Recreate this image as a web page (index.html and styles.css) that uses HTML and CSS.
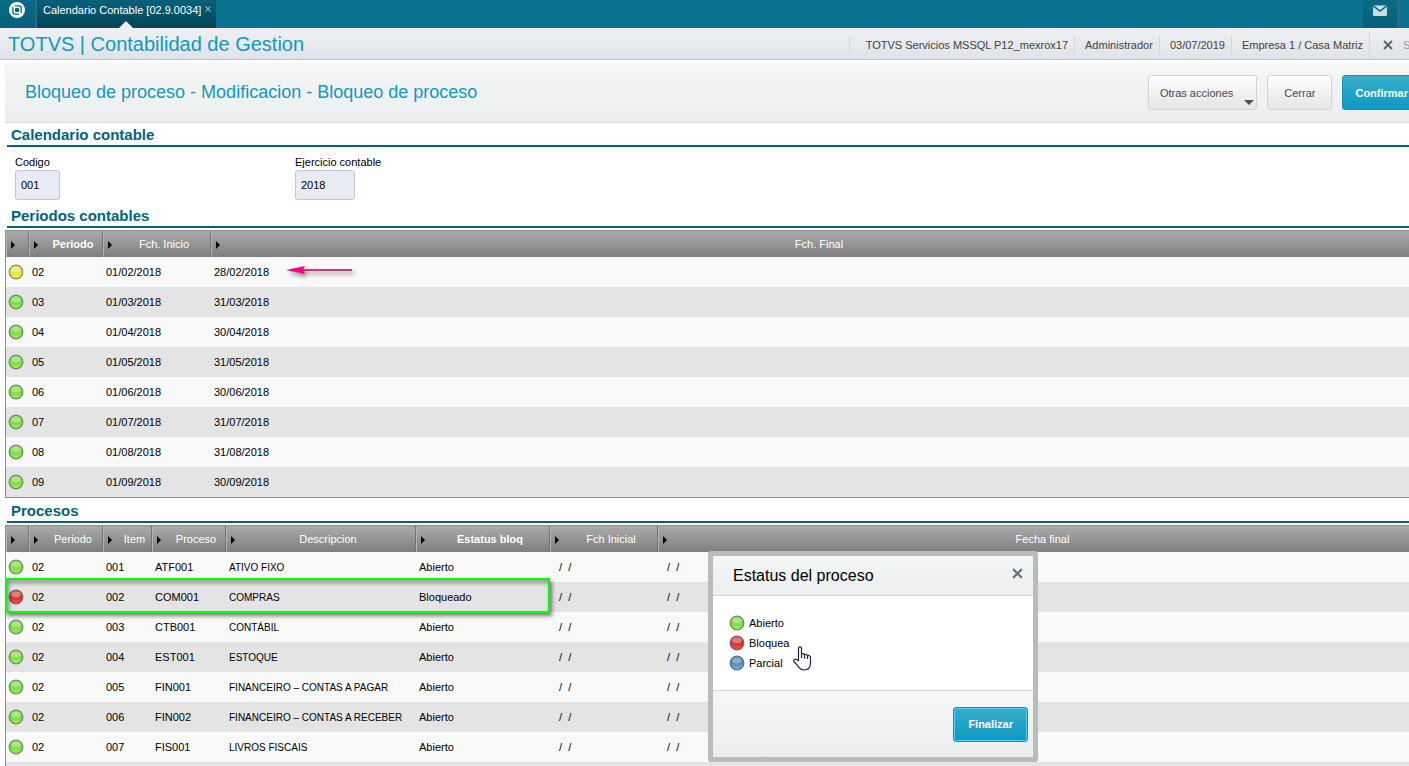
FILE: index.html
```html
<!DOCTYPE html>
<html lang="es">
  <head>
    <meta charset="UTF-8" />
    <meta name="viewport" content="width=device-width, initial-scale=1" />
    <title>Calendario Contable | TOTVS</title>
    <link rel="stylesheet" href="styles.css">
  </head>
  <body>
    <svg class="defs" aria-hidden="true">
      <defs>
        <linearGradient id="gYellow" x2="0" y2="1"><stop offset="0" stop-color="#e0de58"/><stop offset=".5" stop-color="#e4e33a"/><stop offset="1" stop-color="#f2f238"/></linearGradient>
        <linearGradient id="gGreen" x2="0" y2="1"><stop offset="0" stop-color="#86d455"/><stop offset=".5" stop-color="#78da3a"/><stop offset="1" stop-color="#9cf55c"/></linearGradient>
        <linearGradient id="gRed" x2="0" y2="1"><stop offset="0" stop-color="#c94747"/><stop offset=".5" stop-color="#d92a2a"/><stop offset="1" stop-color="#ff5050"/></linearGradient>
        <linearGradient id="gBlue" x2="0" y2="1"><stop offset="0" stop-color="#4f83b8"/><stop offset=".5" stop-color="#4682be"/><stop offset="1" stop-color="#82baee"/></linearGradient>
        <g id="shine"><ellipse cx="8" cy="5.500" rx="4.800" ry="3" fill="#fff" opacity=".35"/></g>
        <symbol id="yellow" viewBox="0 0 16 16"><circle cx="8" cy="8" r="6.8" fill="url(#gYellow)" stroke="#8f8f6a" stroke-width="1.3"/><use href="#shine"/></symbol>
        <symbol id="green" viewBox="0 0 16 16"><circle cx="8" cy="8" r="6.8" fill="url(#gGreen)" stroke="#71906a" stroke-width="1.3"/><use href="#shine"/></symbol>
        <symbol id="red" viewBox="0 0 16 16"><circle cx="8" cy="8" r="6.8" fill="url(#gRed)" stroke="#7f6262" stroke-width="1.3"/><use href="#shine"/></symbol>
        <symbol id="blue" viewBox="0 0 16 16"><circle cx="8" cy="8" r="6.8" fill="url(#gBlue)" stroke="#62748a" stroke-width="1.3"/><use href="#shine"/></symbol>
        <symbol id="close" viewBox="0 0 10 10"><path d="M1 1l8 8M9 1l-8 8" fill="none" stroke="currentColor" stroke-width="2"/></symbol>
      </defs>
    </svg>

    <div class="page">
      <nav class="topbar">
        <a href="#" class="home" aria-label="Inicio">
          <svg width="18" height="18" viewBox="0 0 18 18"><circle cx="9" cy="9" r="8" fill="#fff"/><path d="M6.500 4.200H11c2 0 2.800 1 2.800 2.800v5.200c-1-.2-1.300-.8-1.300-1.800V7.300c0-1.300-.5-1.800-1.800-1.800H8.200c-1 0-1.600-.4-1.700-1.300zM11.500 13.800H7c-2 0-2.800-1-2.800-2.800V5.800c1 .2 1.300.8 1.300 1.800v3.100c0 1.300.5 1.800 1.800 1.800h2.500c1 0 1.600.4 1.700 1.300z" fill="#08657e"/><rect x="7" y="7" width="4" height="4" rx=".8" fill="#08657e"/></svg>
        </a>
        <div class="tab">
          <span>Calendario Contable [02.9.0034]</span>
          <button type="button" class="tab-close" aria-label="Cerrar pestaña"><svg width="6" height="6"><use href="#close"/></svg></button>
        </div>
        <button type="button" class="mail" aria-label="Mensajes">
          <svg width="14" height="11" viewBox="0 0 14 11"><rect y=".5" width="14" height="10.500" rx="1" fill="#cbdde3"/><path d="M.5 1.200L7 6l6.500-4.800" fill="none" stroke="#08657e" stroke-width="1.500"/></svg>
        </button>
      </nav>

      <header class="appbar">
        <h1>TOTVS | Contabilidad de Gestion</h1>
        <ul class="session">
          <li>TOTVS Servicios MSSQL P12_mexrox17</li>
          <li>Administrador</li>
          <li>03/07/2019</li>
          <li>Empresa 1 / Casa Matriz</li>
        </ul>
        <a href="#" class="exit"><svg width="10" height="10"><use href="#close"/></svg>Salir</a>
      </header>

      <main>
        <div class="title-bar">
          <h2>Bloqueo de proceso - Modificacion - Bloqueo de proceso</h2>
          <button type="button" class="btn btn-menu">Otras acciones</button>
          <button type="button" class="btn">Cerrar</button>
          <button type="button" class="btn btn-primary">Confirmar</button>
        </div>

        <h3>Calendario contable</h3>
        <form class="fields">
          <div class="field">
            <label for="codigo">Codigo</label>
            <input type="text" id="codigo" class="short" value="001" readonly />
          </div>
          <div class="field">
            <label for="ejercicio">Ejercicio contable</label>
            <input type="text" id="ejercicio" class="long" value="2018" readonly />
          </div>
        </form>

        <h3>Periodos contables</h3>
        <table class="grid periodos">
          <colgroup><col class="c-dot"><col class="c-periodo"><col class="c-fecha"><col></colgroup>
          <thead>
            <tr><th></th><th class="sorted">Periodo</th><th>Fch. Inicio</th><th>Fch. Final</th></tr>
          </thead>
          <tbody>
            <tr><td><svg class="dot"><use href="#yellow"/></svg></td><td>02</td><td>01/02/2018</td><td class="marked">28/02/2018
              <svg class="arrow" width="72" height="18" viewBox="0 0 72 18"><path d="M17 6h49" stroke="#c8387f" stroke-width="2"/><path d="M0 6l19-4-2 4 2 4z" fill="#ff0080"/></svg></td></tr>
            <tr><td><svg class="dot"><use href="#green"/></svg></td><td>03</td><td>01/03/2018</td><td>31/03/2018</td></tr>
            <tr><td><svg class="dot"><use href="#green"/></svg></td><td>04</td><td>01/04/2018</td><td>30/04/2018</td></tr>
            <tr><td><svg class="dot"><use href="#green"/></svg></td><td>05</td><td>01/05/2018</td><td>31/05/2018</td></tr>
            <tr><td><svg class="dot"><use href="#green"/></svg></td><td>06</td><td>01/06/2018</td><td>30/06/2018</td></tr>
            <tr><td><svg class="dot"><use href="#green"/></svg></td><td>07</td><td>01/07/2018</td><td>31/07/2018</td></tr>
            <tr><td><svg class="dot"><use href="#green"/></svg></td><td>08</td><td>01/08/2018</td><td>31/08/2018</td></tr>
            <tr><td><svg class="dot"><use href="#green"/></svg></td><td>09</td><td>01/09/2018</td><td>30/09/2018</td></tr>
          </tbody>
        </table>

        <h3>Procesos</h3>
        <table class="grid procesos">
          <colgroup><col class="c-dot"><col class="c-periodo"><col class="c-item"><col class="c-periodo"><col class="c-desc"><col class="c-estatus"><col class="c-fecha"><col></colgroup>
          <thead>
            <tr><th></th><th>Periodo</th><th>Item</th><th>Proceso</th><th>Descripcion</th><th class="sorted">Estatus bloq</th><th>Fch Inicial</th><th>Fecha final</th></tr>
          </thead>
          <tbody>
            <tr><td><svg class="dot"><use href="#green"/></svg></td><td>02</td><td>001</td><td>ATF001</td><td class="desc">ATIVO FIXO</td><td>Abierto</td><td class="date">/&nbsp; /</td><td class="date">/&nbsp; /</td></tr>
            <tr><td class="marked"><span class="highlight"></span><svg class="dot"><use href="#red"/></svg></td><td>02</td><td>002</td><td>COM001</td><td class="desc">COMPRAS</td><td>Bloqueado</td><td class="date">/&nbsp; /</td><td class="date">/&nbsp; /</td></tr>
            <tr><td><svg class="dot"><use href="#green"/></svg></td><td>02</td><td>003</td><td>CTB001</td><td class="desc">CONTÁBIL</td><td>Abierto</td><td class="date">/&nbsp; /</td><td class="date">/&nbsp; /</td></tr>
            <tr><td><svg class="dot"><use href="#green"/></svg></td><td>02</td><td>004</td><td>EST001</td><td class="desc">ESTOQUE</td><td>Abierto</td><td class="date">/&nbsp; /</td><td class="date">/&nbsp; /</td></tr>
            <tr><td><svg class="dot"><use href="#green"/></svg></td><td>02</td><td>005</td><td>FIN001</td><td class="desc">FINANCEIRO – CONTAS A PAGAR</td><td>Abierto</td><td class="date">/&nbsp; /</td><td class="date">/&nbsp; /</td></tr>
            <tr><td><svg class="dot"><use href="#green"/></svg></td><td>02</td><td>006</td><td>FIN002</td><td class="desc">FINANCEIRO – CONTAS A RECEBER</td><td>Abierto</td><td class="date">/&nbsp; /</td><td class="date">/&nbsp; /</td></tr>
            <tr><td><svg class="dot"><use href="#green"/></svg></td><td>02</td><td>007</td><td>FIS001</td><td class="desc">LIVROS FISCAIS</td><td>Abierto</td><td class="date">/&nbsp; /</td><td class="date">/&nbsp; /</td></tr>
            <tr><td></td><td></td><td></td><td></td><td></td><td></td><td></td><td></td></tr>
          </tbody>
        </table>
      </main>
    </div>

    <section class="dialog" role="dialog" aria-labelledby="dialogTitle">
      <header>
        <h4 id="dialogTitle">Estatus del proceso</h4>
        <button type="button" class="dialog-close" aria-label="Cerrar"><svg width="11" height="11"><use href="#close"/></svg></button>
      </header>
      <ul class="legend">
        <li><svg class="dot"><use href="#green"/></svg>Abierto</li>
        <li><svg class="dot"><use href="#red"/></svg>Bloquea</li>
        <li><svg class="dot"><use href="#blue"/></svg>Parcial</li>
      </ul>
      <footer><button type="button" class="btn btn-primary btn-focus">Finalizar</button></footer>
      <svg class="pointer" width="19" height="25" viewBox="0 0 19 25"><path d="M5.500 14.500V2.500c0-2.300 3-2.300 3 0v5.700c.8-1 2.700-.8 3 .6 1-.8 2.600-.4 3 .9 1.200-.7 3 0 3 1.800V17c0 4.500-2.500 7-6.500 7-3 0-4.500-1.500-6-3.800L1 15.500c-1-1.800 1.200-3.200 2.600-1.900z" fill="#fff" stroke="#23233a" stroke-width="1.200" stroke-linejoin="round"/><path d="M8.500 8.200V12M11.500 9v3.500M14.500 10v3" stroke="#23233a" stroke-width="1.200"/></svg>
    </section>
  </body>
</html>
```
FILE: styles.css
```css
* {
  box-sizing: border-box;
  margin: 0;
  padding: 0;
}
body {
  position: relative;
  height: 100vh;
  overflow: hidden;
  background: #fff;
  color: #000;
  font-family: "Liberation Sans", Arial, sans-serif;
  font-size: 11px;
}
button, input {
  font: inherit;
}
button {
  border: none;
  background: none;
  cursor: pointer;
}
ul {
  list-style: none;
}
.defs {
  position: absolute;
  width: 0;
  height: 0;
}
.page {
  margin-right: -20px;
}

/* top bar */
.topbar {
  display: flex;
  height: 28px;
  background: #0b728f;
}
.home {
  width: 37px;
  padding: 1px 0 0 8px;
  background: linear-gradient(#086b86, #07607a);
  border-right: 2px solid #2a6c7c;
}
.tab {
  position: relative;
  display: flex;
  align-items: flex-start;
  justify-content: space-between;
  width: 179px;
  padding: 4px 5px 0 6px;
  background: linear-gradient(#07607a, #044556);
  color: #fff;
}
.tab::after {
  content: "";
  position: absolute;
  left: 82px;
  bottom: 0;
  border: 7px solid transparent;
  border-top-width: 0;
  border-bottom-color: #eeeff1;
}
.tab-close {
  display: flex;
  padding-top: 2px;
  color: #8db4be;
}
.mail {
  width: 36px;
  margin-left: auto;
  margin-right: 30px;
  padding-bottom: 6px;
  background: linear-gradient(#086b86, #07607a);
  border-right: 2px solid #2a6c7c;
}

/* application bar */
.appbar {
  display: flex;
  align-items: center;
  height: 32px;
  padding: 2px 0 0 8px;
  background: linear-gradient(#eff0f2, #dfe3e8);
  border-bottom: 1px solid #bcc2cb;
}
h1 {
  color: #1199c0;
  font-size: 20px;
  font-weight: normal;
}
.session {
  display: flex;
  margin-left: auto;
  color: #424242;
}
.session li {
  padding: 0 6px 0 10px;
  border-left: 1px solid #d3d7d9;
  line-height: 18px;
}
.session li:first-child {
  padding-left: 16px;
}
.exit {
  display: flex;
  align-items: center;
  gap: 10px;
  width: 60px;
  padding-left: 13px;
  border-left: 1px solid #d3d7d9;
  line-height: 28px;
  color: #999da3;
  text-decoration: none;
}
.exit svg {
  color: #5e6470;
}

main {
  padding: 0 15px 0 5px;
}
.title-bar {
  display: flex;
  align-items: center;
  gap: 10px;
  height: 60px;
  margin: 3px -10px 0 0;
  padding: 0 3px 0 20px;
  background: linear-gradient(#f5f7f6, #ecedef);
  border-bottom: 1px solid #d8d9da;
}
h2 {
  margin-right: auto;
  color: #1199c0;
  font-size: 18px;
  font-weight: normal;
}
.btn {
  height: 35px;
  padding: 0 16px;
  border: 1px solid #d3d3d3;
  border-radius: 3px;
  background: linear-gradient(#fff, #e5e5e5);
  color: #444957;
}
.btn-menu {
  position: relative;
  padding: 0 23px 0 11px;
}
.btn-menu::after {
  content: "";
  position: absolute;
  right: 2px;
  bottom: 4px;
  border: 5px solid transparent;
  border-top-color: #4a4e5c;
  border-bottom-width: 0;
}
.btn-primary {
  padding: 0 12px;
  border-color: #1890b0;
  background: linear-gradient(#38adcc, #0f9abf);
  color: #fff;
  font-weight: bold;
}
.btn-focus {
  padding: 0 14px;
  box-shadow: inset 0 0 0 1px #4fd3f2;
}

h3 {
  height: 24px;
  margin-left: 2px;
  padding: 3px 4px 0;
  border-bottom: 2px solid #006380;
  color: #006380;
  font-size: 15px;
  line-height: 18px;
}
.fields {
  display: flex;
  padding: 9px 10px 4px;
}
.field {
  width: 280px;
}
.field label {
  display: block;
  height: 14px;
  line-height: 13px;
}
.field input {
  display: block;
  height: 30px;
  padding: 0 5px;
  border: 1px solid #c3c6cb;
  border-radius: 3px;
  background: #e8ebf4;
}
.field .short {
  width: 45px;
}
.field .long {
  width: 60px;
}

/* grids */
.grid {
  width: 100%;
  margin: 2px 0 1px;
  table-layout: fixed;
  border-spacing: 0;
  border: 1px solid #8e8e8e;
}
.c-dot {
  width: 23px;
}
.c-periodo {
  width: 74px;
}
.c-item {
  width: 49px;
}
.c-desc {
  width: 190px;
}
.c-estatus {
  width: 134px;
}
.c-fecha {
  width: 108px;
}
.grid th {
  position: relative;
  height: 26px;
  padding-left: 14px;
  background: linear-gradient(#aaa, #7f7f7f);
  border-right: 1px solid #747474;
  border-left: 1px solid #b4b4b4;
  color: #fff;
  font-weight: normal;
}
.grid th.sorted {
  font-weight: bold;
}
.grid th::before {
  content: "";
  position: absolute;
  left: 4px;
  top: 10px;
  border: 4px solid transparent;
  border-left-color: #000;
  border-right-width: 0;
}
.grid td {
  height: 30px;
  padding-left: 3px;
  background: #f9f9f9;
  white-space: nowrap;
}
.grid td:first-child {
  padding-left: 2px;
}
.grid tr:nth-child(even) td {
  background: #e4e4e4;
}
.grid .date {
  padding-left: 9px;
}
.grid .desc {
  font-size: 10px;
}
.dot {
  display: block;
  width: 16px;
  height: 16px;
}
.marked {
  position: relative;
}
.arrow {
  position: absolute;
  left: 75px;
  top: 7px;
  filter: drop-shadow(2px 3px 2px rgba(0, 0, 0, 0.45));
}
.highlight {
  position: absolute;
  left: -1px;
  top: -4px;
  z-index: 1;
  width: 545px;
  height: 35px;
  border: 2px solid #0f0;
  box-shadow: 2px 3px 4px rgba(0, 0, 0, 0.5), inset 2px 3px 4px rgba(0, 0, 0, 0.4);
}

/* status dialog */
.dialog {
  position: absolute;
  left: 708px;
  top: 551px;
  z-index: 2;
  width: 330px;
  border: 5px solid #bbb;
  border-radius: 3px;
  background: #fff;
}
.dialog header {
  display: flex;
  align-items: center;
  justify-content: space-between;
  height: 40px;
  padding: 0 10px 0 20px;
  background: linear-gradient(#f5f7f6, #ecedef);
  border-bottom: 1px solid #d3d5d6;
}
h4 {
  font-size: 16px;
  font-weight: normal;
}
.dialog-close {
  display: flex;
  padding-bottom: 4px;
  color: #66707c;
}
.legend {
  height: 94px;
  padding: 17px 16px;
}
.legend li {
  display: flex;
  align-items: center;
  gap: 4px;
  height: 20px;
}
.dialog footer {
  display: flex;
  align-items: center;
  justify-content: flex-end;
  height: 67px;
  padding: 0 5px;
  background: linear-gradient(#f5f7f6, #ecedef);
  border-top: 1px solid #d3d5d6;
}
.pointer {
  position: absolute;
  left: 80px;
  top: 90px;
}
```
